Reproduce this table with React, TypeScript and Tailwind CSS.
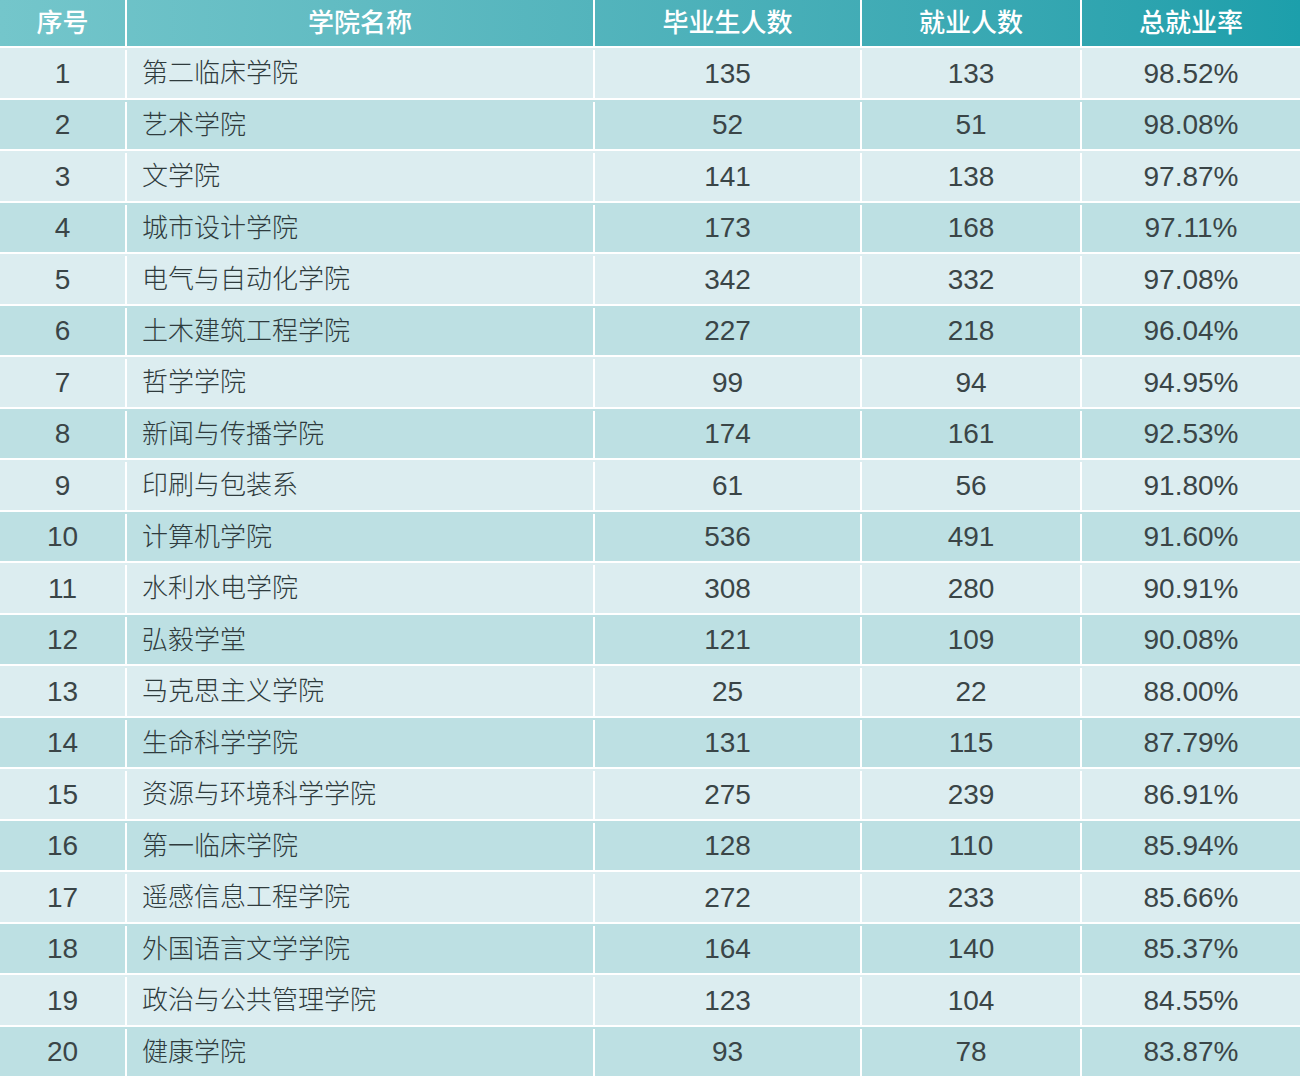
import React from "react";

const rows: [string, number, number, string][] = [
  ["第二临床学院", 135, 133, "98.52%"],
  ["艺术学院", 52, 51, "98.08%"],
  ["文学院", 141, 138, "97.87%"],
  ["城市设计学院", 173, 168, "97.11%"],
  ["电气与自动化学院", 342, 332, "97.08%"],
  ["土木建筑工程学院", 227, 218, "96.04%"],
  ["哲学学院", 99, 94, "94.95%"],
  ["新闻与传播学院", 174, 161, "92.53%"],
  ["印刷与包装系", 61, 56, "91.80%"],
  ["计算机学院", 536, 491, "91.60%"],
  ["水利水电学院", 308, 280, "90.91%"],
  ["弘毅学堂", 121, 109, "90.08%"],
  ["马克思主义学院", 25, 22, "88.00%"],
  ["生命科学学院", 131, 115, "87.79%"],
  ["资源与环境科学学院", 275, 239, "86.91%"],
  ["第一临床学院", 128, 110, "85.94%"],
  ["遥感信息工程学院", 272, 233, "85.66%"],
  ["外国语言文学学院", 164, 140, "85.37%"],
  ["政治与公共管理学院", 123, 104, "84.55%"],
  ["健康学院", 93, 78, "83.87%"],
];

const font = { fontFamily: '"Liberation Sans", "Noto Sans CJK SC", sans-serif' };

export default function App() {
  return (
    <div className="w-[1300px] h-[1078px] overflow-hidden bg-white" style={font}>
      <div className="flex h-[48px] bg-gradient-to-r from-[#74c6cb] to-[#1c9fab] text-white font-medium text-[26px] border-b-2 border-white">
        <div className="w-[127px] shrink-0 flex items-center justify-center border-r-2 border-white">序号</div>
        <div className="w-[468px] shrink-0 flex items-center justify-center border-r-2 border-white">学院名称</div>
        <div className="w-[267px] shrink-0 flex items-center justify-center border-r-2 border-white">毕业生人数</div>
        <div className="w-[220px] shrink-0 flex items-center justify-center border-r-2 border-white">就业人数</div>
        <div className="w-[218px] shrink-0 flex items-center justify-center">总就业率</div>
      </div>
      {rows.map((r, i) => (
        <div
          key={i}
          className={`flex h-[51.5px] pt-[2px] border-b-2 border-white text-[#3a4547] text-[28px] ${i % 2 === 0 ? "bg-[#dcedf0]" : "bg-[#bde0e3]"}`}
        >
          <div className="w-[127px] shrink-0 flex items-center justify-center border-r-2 border-white">{i + 1}</div>
          <div className="w-[468px] shrink-0 flex items-center pl-[15px] border-r-2 border-white text-[26px] font-light text-[#2f3b3d]">{r[0]}</div>
          <div className="w-[267px] shrink-0 flex items-center justify-center border-r-2 border-white">{r[1]}</div>
          <div className="w-[220px] shrink-0 flex items-center justify-center border-r-2 border-white">{r[2]}</div>
          <div className="w-[218px] shrink-0 flex items-center justify-center">{r[3]}</div>
        </div>
      ))}
    </div>
  );
}
